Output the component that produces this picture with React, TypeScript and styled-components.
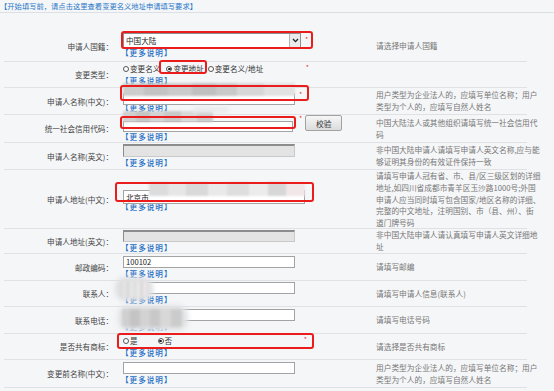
import React from "react";
import styled, { createGlobalStyle } from "styled-components";

const GlobalStyle = createGlobalStyle`
  html, body { margin: 0; padding: 0; background: #f5f6f8; }
  body {
    font-family: "Noto Sans CJK SC", "Noto Sans", sans-serif;
    width: 554px;
    height: 391px;
    overflow: hidden;
  }
  * { box-sizing: border-box; }
`;

const Page = styled.div`
  width: 554px;
  height: 391px;
  background: #f5f6f8;
  overflow: hidden;
`;

const Banner = styled.div`
  height: 13px;
  border-bottom: 1px solid #dcdfe3;
  color: #2a78c8;
  font-size: 7.3px;
  line-height: 12px;
  white-space: nowrap;
  cursor: pointer;
`;

const Row = styled.div<{ $h: number; $pt?: number }>`
  position: relative;
  display: grid;
  grid-template-columns: 109px 262px 1fr;
  align-items: center;
  height: ${(p) => p.$h}px;
  padding-top: ${(p) => p.$pt ?? 0}px;
  margin: 0 27px 0 4px;
  border-bottom: 1px solid #dfe1e5;
`;

const Label = styled.div`
  text-align: right;
  font-size: 7.6px;
  line-height: 11px;
  color: #444;
  white-space: nowrap;
`;

const Field = styled.div`
  display: flex;
  flex-direction: column;
  align-items: flex-start;
  padding-left: 10px;
`;

const Help = styled.div`
  font-size: 7.7px;
  line-height: 11.8px;
  color: #777;
  white-space: nowrap;
  padding-left: 1px;
`;

const Line = styled.div<{ $w?: number }>`
  display: flex;
  align-items: center;
  width: ${(p) => (p.$w ? `${p.$w}px` : "auto")};
  height: 12px;
`;

const TextInput = styled.input<{ $w?: number; $h?: number }>`
  width: ${(p) => p.$w ?? 172}px;
  height: ${(p) => p.$h ?? 12}px;
  margin: 0;
  padding: 0 2px;
  border: 1px solid #a3a3a3;
  background: #fff;
  font-family: inherit;
  font-size: 7.6px;
  color: #222;
  outline: none;
  &:disabled {
    background: #e3e3e3;
    border-color: #c9c9c9;
    border-top: 2px solid #8c8c8c;
    border-left: 1px solid #8c8c8c;
  }
`;

const Select = styled.div`
  display: flex;
  align-items: stretch;
  width: 178px;
  height: 15px;
  border: 1px solid #8f8f8f;
  background: #fff;
`;

const SelectText = styled.span`
  flex: 1;
  padding-left: 2px;
  font-size: 7.6px;
  line-height: 13px;
  color: #222;
`;

const SelectArrow = styled.span`
  width: 11px;
  display: flex;
  align-items: center;
  justify-content: center;
  background: #ebebeb;
  border-left: 1px solid #b4b4b4;
`;

const Star = styled.span<{ $ml?: number }>`
  color: #e53935;
  font-size: 7px;
  line-height: 7px;
  margin-left: ${(p) => p.$ml ?? 4}px;
  align-self: flex-start;
  margin-top: 1px;
`;

const More = styled.a`
  color: #1f6fc5;
  font-size: 7.6px;
  line-height: 10px;
  letter-spacing: 1px;
  margin-top: 1px;
  margin-left: -2px;
  font-weight: 500;
  text-decoration: none;
  white-space: nowrap;
  cursor: pointer;
`;

const Button = styled.button`
  width: 37px;
  height: 16px;
  margin: 0 0 0 3px;
  padding: 0;
  border: 1px solid #a2a2a2;
  border-radius: 2px;
  background: linear-gradient(#f6f6f6, #dcdcdc);
  font-family: inherit;
  font-size: 7.8px;
  color: #333;
`;

const Radio = styled.label<{ $mr?: number }>`
  display: flex;
  align-items: center;
  font-size: 7.6px;
  line-height: 12px;
  color: #333;
  margin-right: ${(p) => p.$mr ?? 0}px;
  white-space: nowrap;
`;

const Dot = styled.span<{ $on?: boolean }>`
  width: 6px;
  height: 6px;
  margin-right: 1px;
  border: 1px solid #555;
  border-radius: 50%;
  background: #fff;
  display: inline-flex;
  align-items: center;
  justify-content: center;
  &::after {
    content: "";
    width: 2.5px;
    height: 2.5px;
    border-radius: 50%;
    background: ${(p) => (p.$on ? "#222" : "transparent")};
  }
`;

const Mark = styled.div<{ $x: number; $y: number; $w: number; $h: number }>`
  position: absolute;
  left: ${(p) => p.$x}px;
  top: ${(p) => p.$y}px;
  width: ${(p) => p.$w}px;
  height: ${(p) => p.$h}px;
  border: 2px solid #ea1c1c;
  border-radius: 3px;
  pointer-events: none;
  z-index: 3;
`;

const Blur = styled.div<{ $x: number; $y: number; $w: number; $h: number; $bg: string; $r?: number; $b?: number }>`
  position: absolute;
  left: ${(p) => p.$x}px;
  top: ${(p) => p.$y}px;
  width: ${(p) => p.$w}px;
  height: ${(p) => p.$h}px;
  background: ${(p) => p.$bg};
  border-radius: ${(p) => p.$r ?? 0}px;
  filter: blur(${(p) => p.$b ?? 1}px);
  pointer-events: none;
  z-index: 2;
`;

const InputWrap = styled.div`
  position: relative;
`;

const mosaicDark =
  "linear-gradient(90deg, #cdcdcd 0 12%, #c3c3c3 12% 26%, #cbcbcb 26% 40%, #c0c0c0 40% 54%, #c9c9c9 54% 66%, #d7d7d7 66% 82%, #e2e2e2 82% 100%)";
const mosaicMid =
  "linear-gradient(90deg, #cfcfcf 0 14%, #c4c4c4 14% 30%, #d3d3d3 30% 46%, #c8c8c8 46% 64%, #d8d8d8 64% 82%, #cbcbcb 82% 100%)";
const mosaicLight =
  "linear-gradient(90deg, #dcdcdc 0 12%, #e6e6e6 12% 24%, #d9d9d9 24% 38%, #e9e9e9 38% 50%, #dedede 50% 64%, #ececec 64% 76%, #d7d7d7 76% 88%, #f1e6e8 88% 100%)";

const MoreLink = () => <More>【更多说明】</More>;

const Chevron = () => (
  <svg width="7" height="5" viewBox="0 0 7 5">
    <path d="M1 1 L3.5 3.6 L6 1" fill="none" stroke="#222" strokeWidth="1.3" />
  </svg>
);

export default function App() {
  return (
    <Page>
      <GlobalStyle />
      <Banner>【开始填写前，请点击这里查看变更名义地址申请填写要求】</Banner>

      <Row $h={49} $pt={18}>
        <Label>申请人国籍：</Label>
        <Field>
          <Line>
            <Select>
              <SelectText>中国大陆</SelectText>
              <SelectArrow>
                <Chevron />
              </SelectArrow>
            </Select>
            <Star>*</Star>
          </Line>
          <MoreLink />
        </Field>
        <Help>请选择申请人国籍</Help>
        <Mark $x={117} $y={18} $w={192} $h={18} />
      </Row>

      <Row $h={26}>
        <Label>变更类型：</Label>
        <Field>
          <Line $w={186}>
            <Radio $mr={6}>
              <Dot />
              变更名义
            </Radio>
            <Radio $mr={4}>
              <Dot $on />
              变更地址
            </Radio>
            <Radio>
              <Dot />
              变更名义/地址
            </Radio>
            <Star $ml={0} style={{ marginLeft: "auto" }}>*</Star>
          </Line>
          <MoreLink />
        </Field>
        <Help />
        <Mark $x={155} $y={-2} $w={48} $h={14} />
      </Row>

      <Row $h={27}>
        <Label>申请人名称(中文)：</Label>
        <Field>
          <Line>
            <InputWrap>
              <TextInput readOnly defaultValue="" />
              <Blur $x={0} $y={-1} $w={172} $h={13} $bg={mosaicDark} $b={0.8} />
            </InputWrap>
            <Star>*</Star>
          </Line>
          <MoreLink />
        </Field>
        <Help>
          用户类型为企业法人的，应填写单位名称；用户
          <br />
          类型为个人的，应填写自然人姓名
        </Help>
        <Mark $x={116} $y={-3} $w={189} $h={16} />
      </Row>

      <Row $h={28}>
        <Label>统一社会信用代码：</Label>
        <Field>
          <Line $w={220} style={{ height: 16 }}>
            <InputWrap>
              <TextInput readOnly defaultValue="" $w={170} $h={11} />
              <Blur $x={0} $y={0} $w={90} $h={11} $bg={mosaicMid} $b={0.8} />
              <Blur $x={70} $y={-4} $w={36} $h={6} $bg="#e9eaec" $r={4} $b={2} />
            </InputWrap>
            <Star $ml={6} style={{ marginTop: 0 }}>*</Star>
            <Button>校验</Button>
          </Line>
          <MoreLink />
        </Field>
        <Help>
          中国大陆法人或其他组织请填写统一社会信用代
          <br />码
        </Help>
        <Mark $x={116} $y={1} $w={176} $h={13} />
      </Row>

      <Row $h={27}>
        <Label>申请人名称(英文)：</Label>
        <Field>
          <Line style={{ height: 13 }}>
            <TextInput disabled $h={13} />
          </Line>
          <MoreLink />
        </Field>
        <Help>
          非中国大陆申请人请填写申请人英文名称,应与能
          <br />
          够证明其身份的有效证件保持一致
        </Help>
      </Row>

      <Row $h={59}>
        <Label>申请人地址(中文)：</Label>
        <Field>
          <Line style={{ height: 14 }}>
            <InputWrap>
              <TextInput readOnly defaultValue="北京市" $w={182} $h={14} />
              <Blur $x={26} $y={0} $w={156} $h={14} $bg={mosaicLight} $b={0.9} />
            </InputWrap>
          </Line>
          <MoreLink />
        </Field>
        <Help>
          请填写申请人冠有省、市、县/区三级区划的详细
          <br />
          地址,如四川省成都市青羊区玉沙路1000号;外国
          <br />
          申请人应当同时填写包含国家/地区名称的详细、
          <br />
          完整的中文地址，注明国别、市（县、州）、街
          <br />
          道门牌号码
        </Help>
        <Mark $x={111} $y={12} $w={199} $h={20} />
      </Row>

      <Row $h={25}>
        <Label>申请人地址(英文)：</Label>
        <Field>
          <Line style={{ height: 12 }}>
            <TextInput disabled />
          </Line>
          <MoreLink />
        </Field>
        <Help>
          非中国大陆申请人请认真填写申请人英文详细地
          <br />址
        </Help>
      </Row>

      <Row $h={27}>
        <Label>邮政编码：</Label>
        <Field>
          <Line>
            <TextInput readOnly defaultValue="100102" />
          </Line>
          <MoreLink />
        </Field>
        <Help>请填写邮编</Help>
      </Row>

      <Row $h={26}>
        <Label>联系人：</Label>
        <Field>
          <Line>
            <TextInput readOnly defaultValue="" />
          </Line>
          <MoreLink />
        </Field>
        <Help>请填写申请人信息(联系人)</Help>
        <Blur $x={111} $y={-4} $w={38} $h={24} $bg="#dfe0e3" $r={10} $b={2.5} />
        <Blur $x={116} $y={0} $w={26} $h={16} $bg={mosaicLight} $r={3} $b={1.5} />
      </Row>

      <Row $h={27}>
        <Label>联系电话：</Label>
        <Field>
          <Line>
            <TextInput readOnly defaultValue="" />
          </Line>
          <MoreLink />
        </Field>
        <Help>请填写电话号码</Help>
        <Blur $x={114} $y={-2} $w={70} $h={26} $bg="#e2e3e6" $r={10} $b={2.5} />
        <Blur $x={118} $y={2} $w={60} $h={18} $bg={mosaicMid} $r={3} $b={1.5} />
      </Row>

      <Row $h={26}>
        <Label>是否共有商标：</Label>
        <Field>
          <Line $w={184}>
            <Radio $mr={20}>
              <Dot />是
            </Radio>
            <Radio>
              <Dot $on />否
            </Radio>
            <Star $ml={0} style={{ marginLeft: "auto" }}>*</Star>
          </Line>
          <MoreLink />
        </Field>
        <Help>请选择是否共有商标</Help>
        <Mark $x={113} $y={-1} $w={197} $h={16} />
      </Row>

      <Row $h={28}>
        <Label>变更前名称(中文)：</Label>
        <Field>
          <Line>
            <TextInput readOnly defaultValue="" />
          </Line>
          <MoreLink />
        </Field>
        <Help>
          用户类型为企业法人的，应填写单位名称；用户
          <br />
          类型为个人的，应填写自然人姓名
        </Help>
      </Row>
    </Page>
  );
}
